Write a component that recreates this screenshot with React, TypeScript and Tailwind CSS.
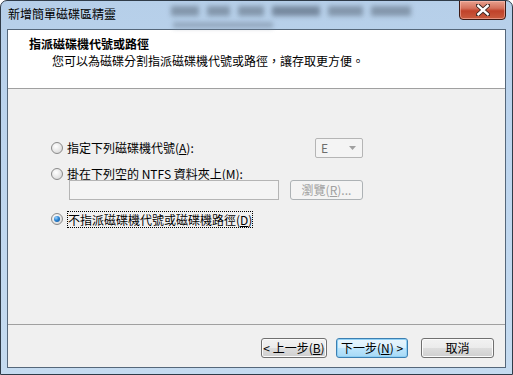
import React from "react";

const FONT = { fontFamily: '"Noto Sans CJK TC", "Noto Sans", sans-serif' };

function Radio({ checked }: { checked?: boolean }) {
  return (
    <div className="w-[12px] h-[12px] rounded-full border border-[#8a8a8a] bg-[radial-gradient(circle_at_40%_35%,#ffffff_0%,#e6e6e6_55%,#cfcfcf_100%)] flex items-center justify-center shrink-0">
      {checked && (
        <div className="w-[6px] h-[6px] rounded-full bg-[radial-gradient(circle_at_35%_30%,#9fd3ff_0%,#2a84d2_45%,#0e4c91_100%)]" />
      )}
    </div>
  );
}

function Btn({
  children,
  w,
  focus,
}: {
  children: React.ReactNode;
  w: string;
  focus?: boolean;
}) {
  return (
    <div
      className={`${w} h-[20px] rounded-[3px] border flex items-center justify-center text-[12px] leading-[14px] text-black ${
        focus
          ? "border-[#3c7fb1] bg-[linear-gradient(180deg,#eaf6fd_0%,#d9f0fc_50%,#bee6fd_51%,#a7d9f5_100%)] shadow-[inset_0_0_0_1px_#8fd0f5]"
          : "border-[#707070] bg-[linear-gradient(180deg,#f2f2f2_0%,#ebebeb_50%,#dddddd_51%,#cfcfcf_100%)] shadow-[inset_0_0_0_1px_#fbfbfb]"
      }`}
    >
      {children}
    </div>
  );
}

export default function App() {
  return (
    <div style={FONT} className="w-[513px] h-[375px] bg-white">
      <div className="w-[513px] h-[375px] flex flex-col border border-[#2f3b48] rounded-t-[7px] overflow-hidden bg-[linear-gradient(180deg,#b6cfe9_0%,#bdd5ee_40%,#c5dbf0_100%)]">
        {/* Title bar */}
        <div className="h-[28px] relative flex items-start pl-[7px] pt-[6px]">
          <div className="absolute left-[170px] top-[5px] w-[240px] h-[10px] flex gap-[8px] blur-[2.5px] opacity-70">
            <div className="w-[28px] bg-[#6e7f92]" />
            <div className="w-[24px] bg-[#6e7f92]" />
            <div className="w-[26px] bg-[#6e7f92]" />
            <div className="w-[48px] bg-[#5c6c80]" />
            <div className="w-[36px] bg-[#6e7f92]" />
            <div className="w-[40px] bg-[#6e7f92]" />
          </div>
          <div className="absolute left-[172px] top-[21px] w-[100px] h-[6px] bg-[#7a8ba0] blur-[2.5px] opacity-60" />
          <span className="relative text-[12px] leading-[14px] text-black">新增簡單磁碟區精靈</span>
          {/* Close button */}
          <div className="absolute right-[6px] top-[-1px] w-[47px] h-[20px] rounded-b-[4px] border border-[#3d1a14] bg-[linear-gradient(180deg,#e8a08e_0%,#d4715c_40%,#c0422a_55%,#c95c3f_100%)] flex items-center justify-center shadow-[inset_0_0_0_1px_rgba(255,200,190,0.5)]">
            <svg width="14" height="12" viewBox="0 0 14 12">
              <path
                d="M2 1.5 L12 10.5 M12 1.5 L2 10.5"
                stroke="#3a2520"
                strokeWidth="4.2"
                strokeLinecap="square"
              />
              <path
                d="M2.3 1.8 L11.7 10.2 M11.7 1.8 L2.3 10.2"
                stroke="#ffffff"
                strokeWidth="2.4"
                strokeLinecap="square"
              />
            </svg>
          </div>
        </div>

        {/* Client area */}
        <div className="flex-1 px-[6px] flex flex-col">
          <div className="h-[339px] border border-[#55677a] bg-[#f0f0f0] flex flex-col">
            {/* Header */}
            <div className="h-[59px] shrink-0 bg-white border-b border-[#a0a0a0] pt-[7px]">
              <div className="pl-[21px] text-[12px] leading-[14px] font-bold text-black">
                指派磁碟機代號或路徑
              </div>
              <div className="pl-[44px] mt-[3px] text-[12px] leading-[14px] text-black">
                您可以為磁碟分割指派磁碟機代號或路徑，讓存取更方便。
              </div>
            </div>

            {/* Body */}
            <div className="h-[235px] shrink-0 pl-[43px] pr-[142px] flex flex-col text-[12px] leading-[14px] text-black">
              <div className="mt-[49px] h-[20px] flex items-center justify-between">
                <div className="flex items-center gap-[4px]">
                  <Radio />
                  <span>
                    指定下列磁碟機代號(<u>A</u>):
                  </span>
                </div>
                <div className="w-[48px] h-[20px] border border-[#b5b5b5] rounded-[2px] bg-[#f4f4f4] flex items-center justify-between pl-[5px] pr-[6px]">
                  <span className="text-[#6d6d6d]">E</span>
                  <svg width="7" height="4" viewBox="0 0 7 4">
                    <path d="M0 0 L7 0 L3.5 4 Z" fill="#a0a0a0" />
                  </svg>
                </div>
              </div>
              <div className="mt-[10px] h-[12px] flex items-center gap-[4px]">
                <Radio />
                <span>
                  掛在下列空的 NTFS 資料夾上(<u>M</u>):
                </span>
              </div>
              <div className="mt-[0px] pl-[18px] h-[20px] flex items-center justify-between">
                <div className="w-[210px] h-[20px] border border-[#b5b5b5] bg-[#f4f4f4]" />
                <div className="w-[73px] h-[20px] rounded-[3px] border border-[#adb2b5] bg-[#f4f4f4] flex items-center justify-center text-[#a0a0a0]">
                  瀏覽(<u>R</u>)...
                </div>
              </div>
              <div className="mt-[10px] h-[18px] flex items-center gap-[4px]">
                <Radio checked />
                <span className="border border-dotted border-black leading-[15px]">
                  不指派磁碟機代號或磁碟機路徑(<u>D</u>)
                </span>
              </div>
            </div>

            {/* Footer */}
            <div className="flex-1 border-t border-[#a0a0a0] flex justify-end items-start pt-[13px] pr-[11px]">
              <Btn w="w-[66px]">
                &lt; 上一步(<u>B</u>)
              </Btn>
              <div className="w-[9px]" />
              <Btn w="w-[72px]" focus>
                下一步(<u>N</u>) &gt;
              </Btn>
              <div className="w-[13px]" />
              <Btn w="w-[73px]">取消</Btn>
            </div>
          </div>
        </div>
        <div className="h-[6px]" />
      </div>
    </div>
  );
}
